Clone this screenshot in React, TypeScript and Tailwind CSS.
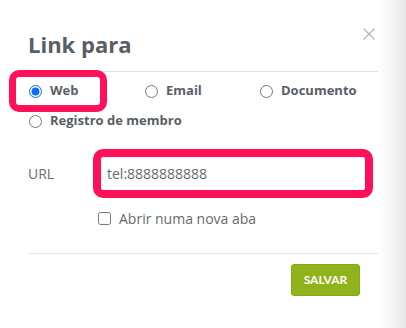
import { useState } from 'react';

const OPTIONS = [
  { id: 'web', label: 'Web' },
  { id: 'email', label: 'Email' },
  { id: 'documento', label: 'Documento' },
  { id: 'membro', label: 'Registro de membro' },
];

export default function App() {
  const [kind, setKind] = useState('web');
  const [url, setUrl] = useState('tel:8888888888');
  const [newTab, setNewTab] = useState(false);

  return (
    <div className="flex h-[328px] w-[406px] overflow-hidden bg-white font-['Open_Sans',sans-serif]">
      <div className="relative flex w-[378px] flex-col pl-[28px]">
        {/* Close */}
        <button
          type="button"
          aria-label="Fechar"
          className="absolute right-[3px] top-[28px] flex h-[12px] w-[12px] items-center justify-center"
        >
          <svg width="12" height="12" viewBox="0 0 12 12" fill="none" stroke="#b3b3b3" strokeWidth="1.2">
            <path d="M0.5 0.5L11.5 11.5M11.5 0.5L0.5 11.5" />
          </svg>
        </button>

        <h2 className="pt-[29px] text-[22px] font-bold leading-[30px] text-[#585e68]">Link para</h2>
        <div className="mt-[12px] h-px bg-[#e3e3e3]" />

        {/* Type options */}
        <div className="relative mt-[4px] grid grid-cols-[116px_115px_1fr]">
          <div className="pointer-events-none absolute left-[-19px] top-[-6px] h-[42px] w-[98px] rounded-[10px] border-[7px] border-[#ff1059]" />
          {OPTIONS.map((o) => (
            <label
              key={o.id}
              className="flex h-[30px] cursor-pointer items-center gap-[8px] whitespace-nowrap pl-px"
            >
              <input
                type="radio"
                name="kind"
                checked={kind === o.id}
                onChange={() => setKind(o.id)}
                className="h-[13px] w-[13px] shrink-0 accent-[#0b6cf5]"
              />
              <span className="text-[13px] font-bold text-[#585e68]">{o.label}</span>
            </label>
          ))}
        </div>

        {/* URL */}
        <div className="mt-[13px] flex items-center">
          <span className="w-[65px] text-[14px] text-[#666a70]">URL</span>
          <input
            value={url}
            onChange={(e) => setUrl(e.target.value)}
            className="h-[49px] w-[280px] rounded-[10px] border-[8px] border-[#ff1059] px-[6px] text-[14px] text-[#666a70] outline-none"
          />
        </div>

        <label className="ml-[70px] mt-[10px] flex h-[20px] cursor-pointer items-center gap-[8px]">
          <input
            type="checkbox"
            checked={newTab}
            onChange={(e) => setNewTab(e.target.checked)}
            className="h-[13px] w-[13px]"
          />
          <span className="text-[14px] text-[#666a70]">Abrir numa nova aba</span>
        </label>

        <div className="mt-[25px] h-px bg-[#e3e3e3]" />

        <div className="mt-[10px] flex justify-end pr-[18px]">
          <button
            type="button"
            className="h-[32px] w-[69px] rounded-[3px] border border-[#86a818] bg-[#8fb41b] font-['Lato',sans-serif] text-[12px] font-bold text-white"
          >
            SALVAR
          </button>
        </div>
      </div>
      <div className="w-[28px] bg-gradient-to-r from-white via-[#f6f6f6] to-[#e6e6e6]" />
    </div>
  );
}
